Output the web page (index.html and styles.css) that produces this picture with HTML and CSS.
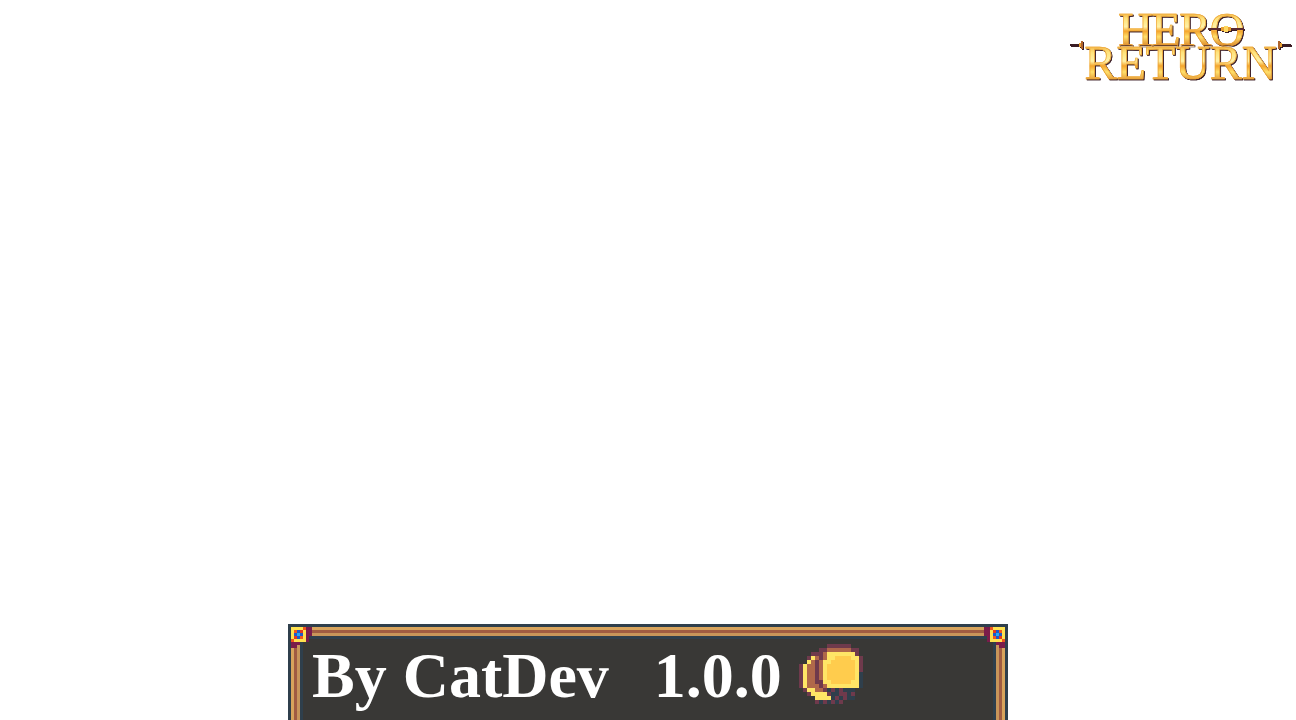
FILE: index.html
```html
<html>
    <head>
        <title> Hero Return </title>
        <link rel="stylesheet" href="styles.css">
    </head>
    <body>
        <div class="logo">
            <div class="logoLine logoHero">HERO</div>
            <div class="logoLine">RETURN</div>
            <!-- bar through the O -->
            <svg class="logoBar" width="36" height="6" viewBox="0 0 36 6" shape-rendering="crispEdges">
                <rect x="0" y="2" width="36" height="2" fill="#5a2a30"/>
                <rect x="13" y="1" width="10" height="4" fill="#e8a030"/>
                <rect x="16" y="0" width="4" height="6" fill="#ffd860"/>
            </svg>
            <svg class="logoTip tipLeft" width="15" height="8" viewBox="0 0 15 8" shape-rendering="crispEdges">
                <rect x="0" y="3" width="9" height="2" fill="#3a1c24"/>
                <rect x="9" y="2" width="4" height="4" fill="#e8a030"/>
                <rect x="11" y="0" width="2" height="8" fill="#b0642c"/>
            </svg>
            <svg class="logoTip tipRight" width="15" height="8" viewBox="0 0 15 8" shape-rendering="crispEdges">
                <rect x="6" y="3" width="9" height="2" fill="#3a1c24"/>
                <rect x="2" y="2" width="4" height="4" fill="#e8a030"/>
                <rect x="2" y="0" width="2" height="8" fill="#b0642c"/>
            </svg>
        </div>

        <div class="panel">
            <div class="railOuter">
                <div class="railMid">
                    <div class="railInner">
                        <div class="container">
                            <span class="credit">By CatDev</span>
                            <span class="credit">1.0.0</span>
                            <!-- coins, 4px pixels -->
                            <svg class="coins" width="64" height="60" viewBox="0 0 16 15" shape-rendering="crispEdges">
                                <path fill="#6f3a4c" d="M7 0h6v1h-6zM5 1h2v1h-2zM13 1h2v1h-2zM3 2h3v1h-3zM14 2h1v1h-1zM2 3h1v1h-1zM5 3h1v1h-1zM15 3h1v4h-1zM4 4h1v6h-1zM0 5h1v6h-1zM5 9h1v2h-1zM1 11h1v1h-1zM6 11h1v1h-1zM8 11h1v1h-1zM10 11h1v1h-1zM2 12h1v1h-1zM7 12h1v1h-1zM10 12h2v1h-2zM13 12h1v1h-1zM9 13h1v1h-1zM11 13h1v1h-1zM4 14h1v1h-1zM6 14h1v1h-1zM8 14h1v1h-1zM10 14h1v1h-1z"/>
                                <path fill="#2f3f4c" d="M15 7h1v4h-1zM7 11h1v1h-1zM9 11h1v1h-1zM11 11h3v1h-3zM8 12h2v1h-2zM12 12h1v1h-1zM8 13h1v1h-1zM10 13h1v1h-1zM12 13h2v1h-2zM5 14h1v1h-1zM7 14h1v1h-1zM9 14h1v1h-1z"/>
                                <path fill="#b0684a" d="M7 1h6v1h-6zM6 2h1v2h-1zM4 3h1v1h-1zM3 4h1v1h-1zM5 4h1v5h-1zM2 5h2v6h-2zM4 10h1v1h-1zM6 10h1v1h-1zM4 11h2v1h-2z"/>
                                <path fill="#ffcc4d" d="M8 3h6v1h-6zM7 4h7v6h-7z"/>
                                <path fill="#ffe566" d="M7 2h7v1h-7zM3 3h1v1h-1zM7 3h2v1h-2zM13 3h1v1h-1zM14 3h1v7h-1zM2 4h1v1h-1zM6 4h2v1h-2zM6 5h1v5h-1zM7 9h1v1h-1zM13 9h1v1h-1zM1 5h1v6h-1zM7 10h8v1h-8zM2 11h2v1h-2zM3 12h4v1h-4zM4 13h4v1h-4z"/>
                            </svg>
                        </div>
                    </div>
                </div>
            </div>
            <svg class="corner cornerLeft" width="27" height="27" viewBox="0 0 9 9" shape-rendering="crispEdges">
                <path fill="#7a1c4a" d="M5 0h2v3h-1v2h-1zM0 5h3v1h-1v1h-2z"/>
                <path fill="#ffe14f" d="M0 0h5v5h-5z"/>
                <path fill="#f0561e" d="M4 0h1v1h-1zM0 4h1v1h-1zM1 1h1v1h-1zM3 3h1v1h-1z"/>
                <path fill="#e33a1e" d="M3 1h1v1h-1zM1 3h1v1h-1z"/>
                <path fill="#2058c8" d="M2 1h1v1h-1zM1 2h1v1h-1zM3 2h1v1h-1zM2 3h1v1h-1z"/>
                <path fill="#28a8f0" d="M2 2h1v1h-1z"/>
            </svg>
            <svg class="corner cornerRight" width="27" height="27" viewBox="0 0 9 9" shape-rendering="crispEdges">
                <path fill="#7a1c4a" d="M4 0h-2v3h1v2h1zM9 5h-3v1h1v1h2z"/>
                <path fill="#ffe14f" d="M4 0h5v5h-5z"/>
                <path fill="#f0561e" d="M4 0h1v1h-1zM8 4h1v1h-1zM7 1h1v1h-1zM5 3h1v1h-1z"/>
                <path fill="#e33a1e" d="M5 1h1v1h-1zM7 3h1v1h-1z"/>
                <path fill="#2058c8" d="M6 1h1v1h-1zM5 2h1v1h-1zM7 2h1v1h-1zM6 3h1v1h-1z"/>
                <path fill="#28a8f0" d="M6 2h1v1h-1z"/>
            </svg>
        </div>
    </body>
</html>
```

FILE: styles.css
```css
body {
    margin: 0;
    height: 720px;
    overflow: hidden;
    background: #FFFFFF;
    display: flex;
    flex-direction: column;
}

/* Logo, top right */
.logo {
    position: relative;
    flex-shrink: 0;
    align-self: flex-end;
    width: 221px;
    height: 84px;
    margin: 0 5px 0 0;
    padding-top: 12px;
    box-sizing: border-box;
    text-align: center;
    font-family: "Liberation Serif", serif;
    font-size: 48px;
    line-height: 36px;
    filter: drop-shadow(1px 1px 0 #3a1c24);
}
.logoLine {
    height: 36px;
    background: linear-gradient(180deg, #f0a838 0%, #ffe27a 20%, #fff2a8 45%, #f5a52c 58%, #ffe06c 75%, #e09030 100%);
    -webkit-background-clip: text;
    background-clip: text;
    color: transparent;
    -webkit-text-stroke: 0.7px #eea434;
}
.logoHero {
    height: 33px;
    letter-spacing: -1.5px;
}
.logoBar {
    position: absolute;
    left: 138px;
    top: 26px;
}
.logoTip {
    position: absolute;
    top: 41px;
}
.tipLeft {
    left: 0;
}
.tipRight {
    right: 0;
}

.panel {
    position: relative;
    flex-shrink: 0;
    align-self: center;
    width: 720px;
    height: 96px;
    margin-top: 540px;
    box-sizing: border-box;
    border: 3px solid #2f3f4c;
    border-bottom: 0;
}
.railOuter {
    height: 100%;
    box-sizing: border-box;
    border: 3px solid #d8a45c;
    border-bottom: 0;
}
.railMid {
    height: 100%;
    box-sizing: border-box;
    border: 3px solid #a05c42;
    border-bottom: 0;
}
.railInner {
    height: 100%;
    box-sizing: border-box;
    border: 3px solid #c8955a;
    border-bottom: 0;
}
.container {
    height: 100%;
    box-sizing: border-box;
    border: 3px solid #2f3f4c;
    border-bottom: 0;
    background: #393836;
    padding: 0 0 0 9px;
    display: flex;
    align-items: flex-start;
    color: #FFFFFF;
    font-family: "Liberation Serif", serif;
    font-weight: bold;
    font-size: 64px;
    line-height: 74px;
}
.credit {
    margin-right: 45px;
}
.credit + .credit {
    margin-right: 17px;
}
.coins {
    margin-top: 5px;
}

/* Gold studs on the frame corners */
.corner {
    position: absolute;
    top: 0;
}
.cornerLeft {
    left: 0;
}
.cornerRight {
    right: 0;
}
```
